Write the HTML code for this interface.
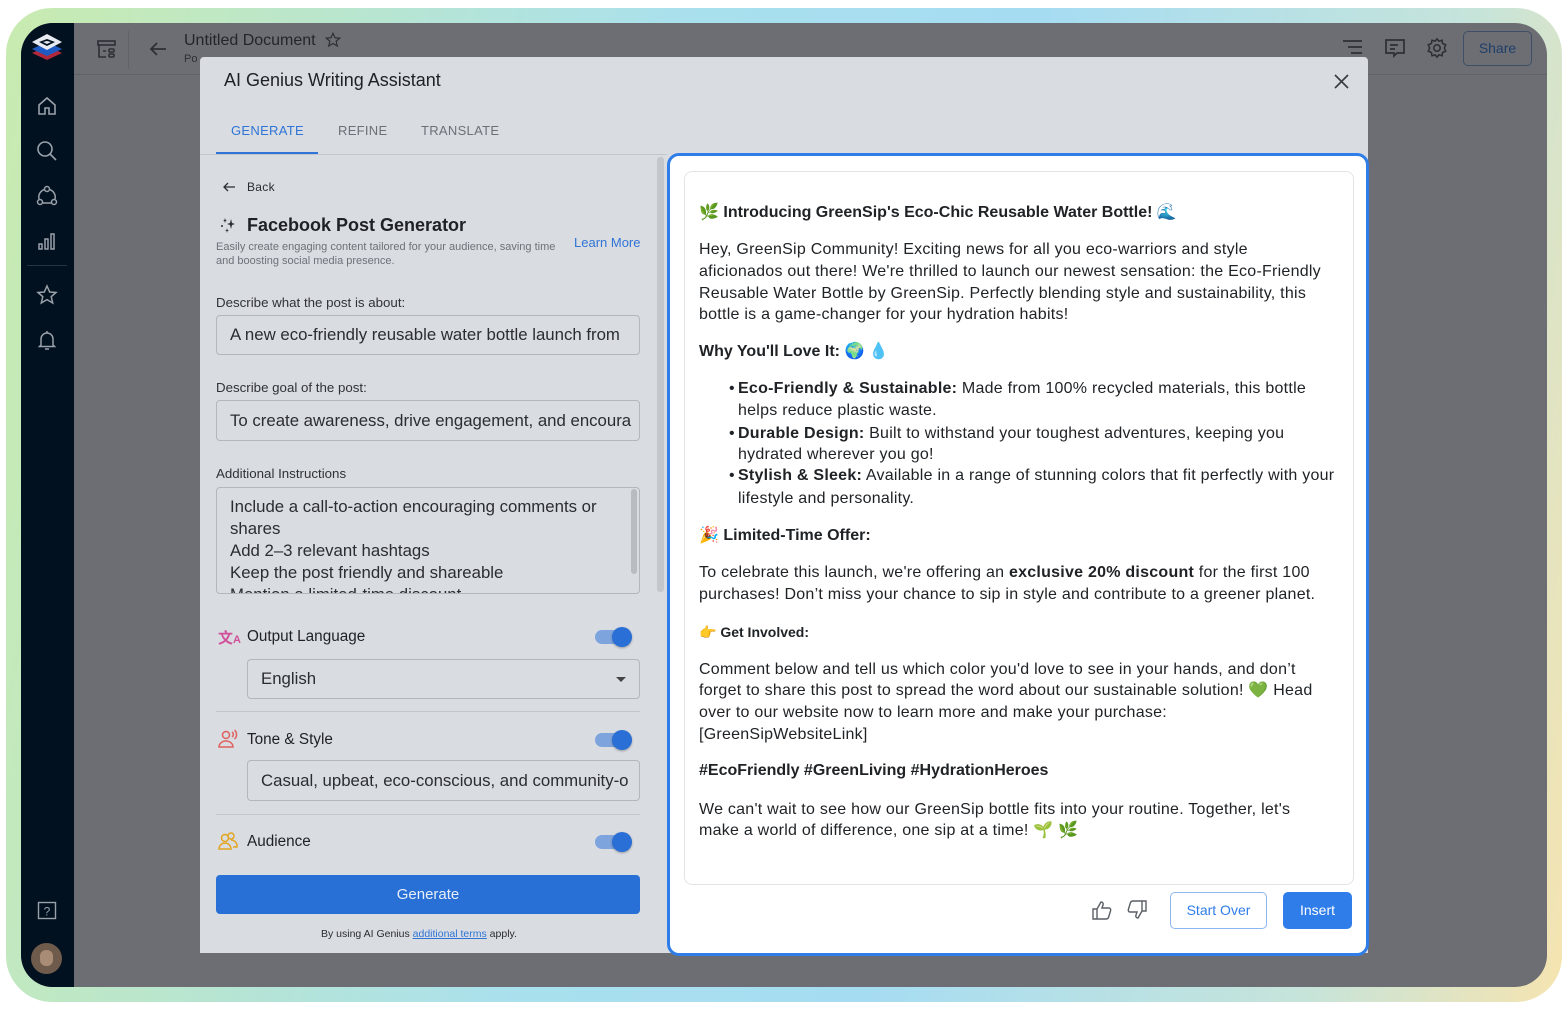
<!DOCTYPE html>
<html><head><meta charset="utf-8"><style>
*{box-sizing:border-box;margin:0;padding:0}
body{width:1568px;height:1010px;background:#fff;font-family:"Liberation Sans","Noto Sans CJK SC",sans-serif;position:relative;overflow:hidden;color:#1f2328}
.frame{position:absolute;left:6px;top:8px;width:1556px;height:994px;border-radius:46px;background:linear-gradient(100deg,#c9ebb0 0%,#a9e0ee 40%,#a6dcf2 60%,#c6e4da 85%,#f6e4b0 100%)}
.app{position:absolute;left:21px;top:23px;width:1526px;height:964px;border-radius:32px;overflow:hidden;background:#6c6e73}
.side{position:absolute;left:0;top:0;width:53px;height:100%;background:#01111f}
.side svg{position:absolute;left:14px}
.hdr{position:absolute;left:53px;top:0;right:0;height:52px;border-bottom:1px solid #5f6267}
.abs{position:absolute}
.modal{position:absolute;left:200px;top:57px;width:1168px;height:896px;background:#d9dce1;border-radius:4px 4px 0 0}
.t{position:absolute;white-space:nowrap}
.inp{position:absolute;border:1px solid #b3b6bb;border-radius:4px;font-size:16.8px;color:#2a2d31;padding-left:13px;overflow:hidden;white-space:nowrap}
.lbl{position:absolute;font-size:13.3px;color:#2f3236;font-weight:500}
.tog{position:absolute;width:37px;height:14px;border-radius:7px;background:#7ea4de}
.tog:after{content:"";position:absolute;right:0;top:-3px;width:20px;height:20px;border-radius:50%;background:#2a6fd6;box-shadow:0 1px 2px rgba(0,0,0,.3)}
.right{position:absolute;left:667px;top:153px;width:702px;height:803px;background:#fff;border:3px solid #2f7de9;border-radius:12px}
.card{position:absolute;left:14px;top:15px;width:670px;height:714px;border:1px solid #e4e4e4;border-radius:8px}
.c{position:absolute;left:699px;font-size:16px;letter-spacing:.25px;color:#202326;white-space:nowrap;line-height:22px}
.h{font-size:16px;letter-spacing:0}
b{font-weight:700}
.bl{position:absolute;left:729px;font-size:16px;line-height:22px}
</style></head><body>
<div class="frame"></div>
<div class="app">
 <div class="side">
  <svg style="left:9px;top:9px" width="34" height="32" viewBox="0 0 34 32"><path d="M17 14 L32 21 L17 28 L2 21Z" fill="#b0283c"/><path d="M17 10 L32 17 L17 24 L2 17Z" fill="#1f5bc4"/><path d="M17 2 L32 10 L17 18 L2 10Z" fill="#e8ecf2"/><path d="M17 7 L25 10 L17 14 L9 10Z" fill="#01111f"/><path d="M17 9 L21 10 L17 12 L13 10Z" fill="#e8ecf2"/></svg>
  <svg style="top:71px" width="24" height="24" viewBox="0 0 24 24" fill="none" stroke="#9aa1aa" stroke-width="1.6"><path d="M4 11 L12 4 L20 11 V20 H14 V14 H10 V20 H4Z"/></svg>
  <svg style="top:116px" width="24" height="24" viewBox="0 0 24 24" fill="none" stroke="#9aa1aa" stroke-width="1.6"><circle cx="10" cy="10" r="7"/><path d="M15 15 L21 21"/></svg>
  <svg style="top:161px" width="24" height="24" viewBox="0 0 24 24" fill="none" stroke="#9aa1aa" stroke-width="1.5"><circle cx="12" cy="5" r="2.5"/><circle cx="5" cy="18" r="2.5"/><circle cx="19" cy="18" r="2.5"/><path d="M9.5 5.5 A8 8 0 0 0 4 15 M14.5 5.5 A8 8 0 0 1 20 15 M7.5 19 H16.5"/></svg>
  <svg style="top:206px" width="24" height="24" viewBox="0 0 24 24" fill="none" stroke="#9aa1aa" stroke-width="1.5"><rect x="4" y="15" width="3" height="5"/><rect x="10" y="10" width="3" height="10"/><rect x="16" y="5" width="3" height="15"/></svg>
  <div class="abs" style="left:6px;top:242px;width:40px;height:1px;background:#253342"></div>
  <svg style="top:260px" width="24" height="24" viewBox="0 0 24 24" fill="none" stroke="#9aa1aa" stroke-width="1.5"><path d="M12 3 L14.7 9 L21 9.5 L16.2 13.7 L17.7 20 L12 16.6 L6.3 20 L7.8 13.7 L3 9.5 L9.3 9Z"/></svg>
  <svg style="top:305px" width="24" height="24" viewBox="0 0 24 24" fill="none" stroke="#9aa1aa" stroke-width="1.5"><path d="M6 17 V11 A6 6 0 0 1 18 11 V17 L19.5 18.5 H4.5Z M10 21 H14 M12 3 V5"/></svg>
  <svg style="top:876px" width="24" height="24" viewBox="0 0 24 24" fill="none" stroke="#9aa1aa" stroke-width="1.4"><rect x="3.5" y="3.5" width="17" height="16"/><text x="12" y="16.5" font-size="12" fill="#9aa1aa" stroke="none" text-anchor="middle" font-family="Liberation Sans">?</text></svg>
  <div class="abs" style="left:10px;top:920px;width:31px;height:31px;border-radius:50%;background:#6e5b4b"><div class="abs" style="left:9px;top:7px;width:13px;height:16px;border-radius:6px;background:#a88c76"></div></div>
 </div>
 <div class="hdr">
  <svg class="abs" style="left:22px;top:16px" width="22" height="22" viewBox="0 0 22 22" fill="none" stroke="#2c3036" stroke-width="1.6"><rect x="2" y="2" width="17" height="4"/><path d="M3 6 V18 H10 M7 12 H10"/><rect x="13" y="10" width="5" height="3" rx="1"/><rect x="13" y="15" width="5" height="3" rx="1"/></svg>
  <div class="abs" style="left:54px;top:8px;width:1px;height:38px;background:#5f6267"></div>
  <svg class="abs" style="left:74px;top:17px" width="20" height="18" viewBox="0 0 20 18" fill="none" stroke="#2c3036" stroke-width="1.8"><path d="M18 9 H3 M9 3 L3 9 L9 15"/></svg>
  <div class="t" style="left:110px;top:9px;font-size:16px;color:#222629">Untitled Document</div>
  <svg class="abs" style="left:250px;top:8px" width="18" height="18" viewBox="0 0 24 24" fill="none" stroke="#2c3036" stroke-width="1.6"><path d="M12 3 L14.7 9 L21 9.5 L16.2 13.7 L17.7 20 L12 16.6 L6.3 20 L7.8 13.7 L3 9.5 L9.3 9Z"/></svg>
  <div class="t" style="left:110px;top:30px;font-size:11px;color:#2c3036">Po</div>
  <svg class="abs" style="left:1268px;top:16px" width="22" height="18" viewBox="0 0 22 18" stroke="#2c3036" stroke-width="1.7"><path d="M1 2 H20 M6 8 H20 M9 14 H20"/></svg>
  <svg class="abs" style="left:1310px;top:14px" width="22" height="22" viewBox="0 0 22 22" fill="none" stroke="#2c3036" stroke-width="1.7"><path d="M2 3 H20 V16 H13 L10 19 V16 H2Z M6 8 H14 M6 12 H11"/></svg>
  <svg class="abs" style="left:1352px;top:14px" width="22" height="22" viewBox="0 0 24 24" fill="none" stroke="#2c3036" stroke-width="1.7"><circle cx="12" cy="12" r="3.5"/><path d="M12 2 L14 4.5 L17.5 3.5 L18 7 L21.5 8.5 L20 12 L21.5 15.5 L18 17 L17.5 20.5 L14 19.5 L12 22 L10 19.5 L6.5 20.5 L6 17 L2.5 15.5 L4 12 L2.5 8.5 L6 7 L6.5 3.5 L10 4.5Z"/></svg>
  <div class="abs" style="left:1389px;top:8px;width:69px;height:35px;border:1px solid #3e4f66;border-radius:5px;color:#1f3f6a;font-size:14px;text-align:center;line-height:33px">Share</div>
 </div>
</div>

<div class="modal">
 <div class="t" style="left:24px;top:13px;font-size:18px;color:#1e2125">AI Genius Writing Assistant</div>
 <svg class="abs" style="left:1134px;top:17px" width="15" height="15" viewBox="0 0 15 15" stroke="#3a3e44" stroke-width="1.7"><path d="M1 1 L14 14 M14 1 L1 14"/></svg>
 <div class="t" style="left:31px;top:66px;font-size:13px;color:#2f74d6;letter-spacing:.3px">GENERATE</div>
 <div class="t" style="left:138px;top:66px;font-size:13px;color:#6c7077;letter-spacing:.3px">REFINE</div>
 <div class="t" style="left:221px;top:66px;font-size:13px;color:#6c7077;letter-spacing:.3px">TRANSLATE</div>
 <div class="abs" style="left:16px;top:95px;width:102px;height:2px;background:#2f74d6"></div>
 <div class="abs" style="left:0;top:97px;width:467px;height:1px;background:#c3c6cb"></div>
 <div class="abs" style="left:457px;top:100px;width:7px;height:435px;background:#c3c6cb;border-radius:3px"></div>

 <svg class="abs" style="left:22px;top:124px" width="14" height="12" viewBox="0 0 14 12" fill="none" stroke="#2a2d31" stroke-width="1.3"><path d="M13 6 H2 M6 2 L2 6 L6 10"/></svg>
 <div class="t" style="left:47px;top:123px;font-size:12px;color:#2a2d31;letter-spacing:.3px">Back</div>
 <svg class="abs" style="left:20px;top:160px" width="16" height="16" viewBox="0 0 16 16" fill="#2a2d31"><path d="M11 2 L12 6 L15 7 L12 8 L11 12 L10 8 L7 7 L10 6Z"/><path d="M5 1 L5.6 3 L7 3.5 L5.6 4 L5 6 L4.4 4 L3 3.5 L4.4 3Z"/><circle cx="2" cy="9" r="1"/><path d="M7 11 L7.5 13 L9 13.5 L7.5 14 L7 16 L6.5 14 L5 13.5 L6.5 13Z"/></svg>
 <div class="t" style="left:47px;top:158px;font-size:18px;font-weight:600;color:#1e2125">Facebook Post Generator</div>
 <div class="t" style="left:16px;top:184px;font-size:11px;color:#6d7178">Easily create engaging content tailored for your audience, saving time</div>
 <div class="t" style="left:16px;top:198px;font-size:11px;color:#6d7178">and boosting social media presence.</div>
 <div class="t" style="left:374px;top:178px;font-size:13px;color:#2f74d6">Learn More</div>

 <div class="lbl" style="left:16px;top:238px">Describe what the post is about:</div>
 <div class="inp" style="left:16px;top:258px;width:424px;height:40px;line-height:38px">A new eco-friendly reusable water bottle launch from</div>
 <div class="lbl" style="left:16px;top:323px">Describe goal of the post:</div>
 <div class="inp" style="left:16px;top:343px;width:424px;height:41px;line-height:39px">To create awareness, drive engagement, and encoura</div>
 <div class="lbl" style="left:16px;top:409px">Additional Instructions</div>
 <div class="inp" style="left:16px;top:430px;width:424px;height:107px;line-height:22px;padding-top:8px;white-space:normal">Include a call-to-action encouraging comments or<br>shares<br>Add 2–3 relevant hashtags<br>Keep the post friendly and shareable<br>Mention a limited-time discount</div>
 <div class="abs" style="left:431px;top:432px;width:6px;height:85px;background:#b8bbc0;border-radius:3px"></div>

 <div class="t" style="left:18px;top:570px;font-size:15px;color:#d0509a;font-weight:700">文<span style="font-size:11px">A</span></div>
 <div class="t" style="left:47px;top:571px;font-size:15.3px;color:#1e2125">Output Language</div>
 <div class="tog" style="left:395px;top:573px"></div>
 <div class="inp" style="left:47px;top:602px;width:393px;height:40px;line-height:38px">English<span class="abs" style="right:13px;top:17px;border-left:5px solid transparent;border-right:5px solid transparent;border-top:5px solid #444"></span></div>
 <div class="abs" style="left:16px;top:654px;width:424px;height:1px;background:#c3c6cb"></div>
 <svg class="abs" style="left:18px;top:672px" width="20" height="20" viewBox="0 0 20 20" fill="none" stroke="#e0625f" stroke-width="1.5"><circle cx="8" cy="6" r="3.5"/><path d="M1 18 A7 6 0 0 1 15 18Z M14 3 A3 3 0 0 1 14 8 M16.5 1 A6 6 0 0 1 16.5 10"/></svg>
 <div class="t" style="left:47px;top:674px;font-size:15.3px;color:#1e2125">Tone &amp; Style</div>
 <div class="tog" style="left:395px;top:676px"></div>
 <div class="inp" style="left:47px;top:703px;width:393px;height:41px;line-height:39px">Casual, upbeat, eco-conscious, and community-o</div>
 <div class="abs" style="left:16px;top:757px;width:424px;height:1px;background:#c3c6cb"></div>
 <svg class="abs" style="left:18px;top:774px" width="20" height="20" viewBox="0 0 20 20" fill="none" stroke="#e3a521" stroke-width="1.5"><circle cx="7" cy="7" r="3.5"/><circle cx="13" cy="5" r="3"/><path d="M1 18 A6 6 0 0 1 13 18Z M13 9 A6 6 0 0 1 19 16 H15"/></svg>
 <div class="t" style="left:47px;top:776px;font-size:15.3px;color:#1e2125">Audience</div>
 <div class="tog" style="left:395px;top:778px"></div>
 <div class="abs" style="left:16px;top:818px;width:424px;height:39px;background:#2870d6;border-radius:4px;color:#e8eef8;font-size:15px;text-align:center;line-height:39px;font-weight:500">Generate</div>
 <div class="t" style="left:121px;top:871px;font-size:10.5px;color:#2a2d31">By using AI Genius <span style="color:#2f74d6;text-decoration:underline">additional terms</span> apply.</div>
</div>

<div class="right">
 <div class="card"></div>
</div>
<div class="c h" style="top:202px"><span style="color:#7cc24d">🌿</span> <b>Introducing GreenSip's Eco-Chic Reusable Water Bottle!</b> <span style="color:#3a8ee6">🌊</span></div>
<div class="c" style="top:239px">Hey, GreenSip Community! Exciting news for all you eco-warriors and style</div>
<div class="c" style="top:261px">aficionados out there! We're thrilled to launch our newest sensation: the Eco-Friendly</div>
<div class="c" style="top:283px">Reusable Water Bottle by GreenSip. Perfectly blending style and sustainability, this</div>
<div class="c" style="top:304px">bottle is a game-changer for your hydration habits!</div>
<div class="c h" style="top:341px"><b>Why You'll Love It:</b> <span style="color:#2a7fd6">🌍 💧</span></div>
<div class="bl" style="top:378px">•</div><div class="c" style="top:378px;left:738px"><b>Eco-Friendly &amp; Sustainable:</b> Made from 100% recycled materials, this bottle</div>
<div class="c" style="top:400px;left:738px">helps reduce plastic waste.</div>
<div class="bl" style="top:423px">•</div><div class="c" style="top:423px;left:738px"><b>Durable Design:</b> Built to withstand your toughest adventures, keeping you</div>
<div class="c" style="top:444px;left:738px">hydrated wherever you go!</div>
<div class="bl" style="top:465px">•</div><div class="c" style="top:465px;left:738px"><b>Stylish &amp; Sleek:</b> Available in a range of stunning colors that fit perfectly with your</div>
<div class="c" style="top:488px;left:738px">lifestyle and personality.</div>
<div class="c h" style="top:525px"><span style="color:#d65ab0">🎉</span> <b>Limited-Time Offer:</b></div>
<div class="c" style="top:562px">To celebrate this launch, we're offering an <b>exclusive 20% discount</b> for the first 100</div>
<div class="c" style="top:584px">purchases! Don’t miss your chance to sip in style and contribute to a greener planet.</div>
<div class="c" style="top:621px;font-size:14px;letter-spacing:0"><span style="color:#f0a030">👉</span> <b>Get Involved:</b></div>
<div class="c" style="top:659px">Comment below and tell us which color you'd love to see in your hands, and don’t</div>
<div class="c" style="top:680px">forget to share this post to spread the word about our sustainable solution! <span style="color:#2ea86a">💚</span> Head</div>
<div class="c" style="top:702px">over to our website now to learn more and make your purchase:</div>
<div class="c" style="top:724px">[GreenSipWebsiteLink]</div>
<div class="c h" style="top:760px"><b>#EcoFriendly #GreenLiving #HydrationHeroes</b></div>
<div class="c" style="top:799px">We can't wait to see how our GreenSip bottle fits into your routine. Together, let's</div>
<div class="c" style="top:820px">make a world of difference, one sip at a time! <span style="color:#3aa860">🌱 🌿</span></div>

<svg class="abs" style="left:1092px;top:901px" width="20" height="19" viewBox="0 0 20 19" fill="none" stroke="#5a5f66" stroke-width="1.4"><path d="M1 8 H5 V18 H1Z M5 8 L9 1 C11 1 11.5 2.5 11 4 L10 7 H17 C18.5 7 19 8.5 18.5 10 L16.5 16.5 C16 17.5 15.5 18 14 18 H5"/></svg>
<svg class="abs" style="left:1127px;top:900px" width="20" height="19" viewBox="0 0 20 19" fill="none" stroke="#5a5f66" stroke-width="1.4"><path d="M19 11 H15 V1 H19Z M15 11 L11 18 C9 18 8.5 16.5 9 15 L10 12 H3 C1.5 12 1 10.5 1.5 9 L3.5 2.5 C4 1.5 4.5 1 6 1 H15"/></svg>
<div class="abs" style="left:1170px;top:892px;width:97px;height:37px;border:1px solid #8bb6f2;border-radius:5px;color:#2f7de9;font-size:14px;text-align:center;line-height:35px">Start Over</div>
<div class="abs" style="left:1283px;top:892px;width:69px;height:37px;background:#2f7de9;border-radius:5px;color:#fff;font-size:14px;text-align:center;line-height:37px;font-weight:500">Insert</div>
</body></html>
